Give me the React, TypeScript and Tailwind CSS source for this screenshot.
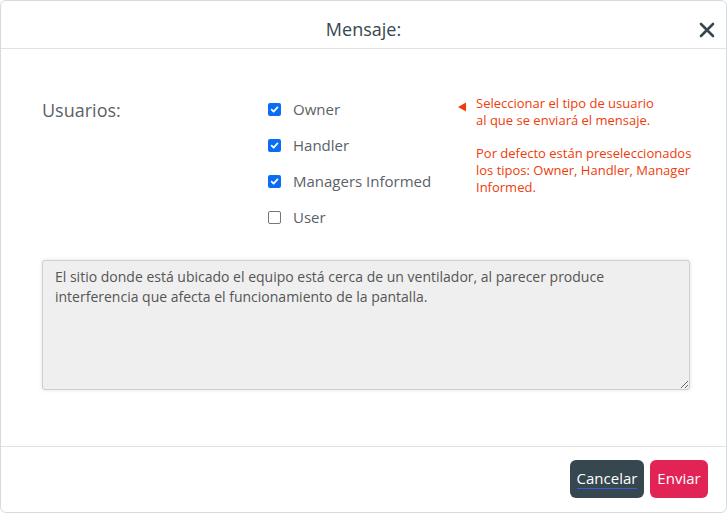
import React from "react";

function Check({ checked }: { checked: boolean }) {
  return checked ? (
    <span className="w-[13px] h-[13px] rounded-[2px] bg-[#0b6cf5] flex items-center justify-center">
      <svg width="9" height="9" viewBox="0 0 10 10">
        <path d="M1.8 5.2 L4 7.4 L8.3 2.6" fill="none" stroke="white" strokeWidth="1.9" strokeLinecap="round" strokeLinejoin="round" />
      </svg>
    </span>
  ) : (
    <span className="w-[13px] h-[13px] rounded-[2px] border border-[#767676] bg-white" />
  );
}

export default function App() {
  const users = [
    { label: "Owner", checked: true },
    { label: "Handler", checked: true },
    { label: "Managers Informed", checked: true },
    { label: "User", checked: false },
  ];
  return (
    <div className="w-[727px] h-[513px] bg-white" style={{ fontFamily: '"Open Sans", sans-serif' }}>
      <div className="w-full h-full border border-[#d5dbe0] rounded-[6px] flex flex-col">
        <div className="h-[48px] border-b border-[#dde3e8] flex items-center justify-center relative shrink-0">
          <span className="text-[18px] text-[#37474f] mt-[9px]">Mensaje:</span>
          <button className="absolute right-[7px] top-[17px] w-[24px] h-[24px] flex items-center justify-center">
            <svg width="16" height="16" viewBox="0 0 16 16">
              <path d="M2 2 L14 14 M14 2 L2 14" stroke="#37474f" strokeWidth="2.6" strokeLinecap="round" />
            </svg>
          </button>
        </div>
        <div className="flex-1 px-[41px] pt-[42px]">
          <div className="flex">
            <div className="w-[226px] shrink-0 text-[18px] text-[#5a6268] pt-[6px]">Usuarios:</div>
            <div className="flex flex-col w-[182px] shrink-0">
              {users.map((u) => (
                <label key={u.label} className="h-[36px] flex items-center gap-[12px] text-[15px] text-[#5a6268]">
                  <Check checked={u.checked} />
                  <span>{u.label}</span>
                </label>
              ))}
            </div>
            <div className="flex pt-[4px] whitespace-nowrap">
              <svg width="10" height="12" viewBox="0 0 10 12" className="mt-[6px] mr-[9px] ml-[7px] shrink-0">
                <path d="M1 6 L9 1.5 L9 10.5 Z" fill="#f03c0a" />
              </svg>
              <div className="text-[13px] leading-[16.8px] text-[#f03c0a]">
                <div>Seleccionar el tipo de usuario</div>
                <div>al que se enviará el mensaje.</div>
                <div className="h-[16.8px]" />
                <div>Por defecto están preseleccionados</div>
                <div>los tipos: Owner, Handler, Manager</div>
                <div>Informed.</div>
              </div>
            </div>
          </div>
          <textarea
            className="mt-[25px] w-[648px] h-[130px] bg-[#efefef] border border-[#c9d0d6] rounded-[3px] shadow-[0_0_4px_rgba(0,0,0,0.12)] px-[12px] py-[6px] text-[14px] leading-[20px] text-[#555] resize-y"
            style={{ fontFamily: '"Open Sans", sans-serif' }}
            defaultValue="El sitio donde está ubicado el equipo está cerca de un ventilador, al parecer produce interferencia que afecta el funcionamiento de la pantalla."
          />
        </div>
        <div className="h-[66px] border-t border-[#dde3e8] flex items-center justify-end gap-[6px] pr-[18px] pb-[2px] shrink-0">
          <button className="h-[38px] w-[74px] rounded-[6px] bg-[#37474f] text-white text-[15px]">
            <span className="border-b border-[#3b5bdb]">Cancelar</span>
          </button>
          <button className="h-[38px] w-[58px] rounded-[6px] bg-[#e22355] text-white text-[15px]">Enviar</button>
        </div>
      </div>
    </div>
  );
}
